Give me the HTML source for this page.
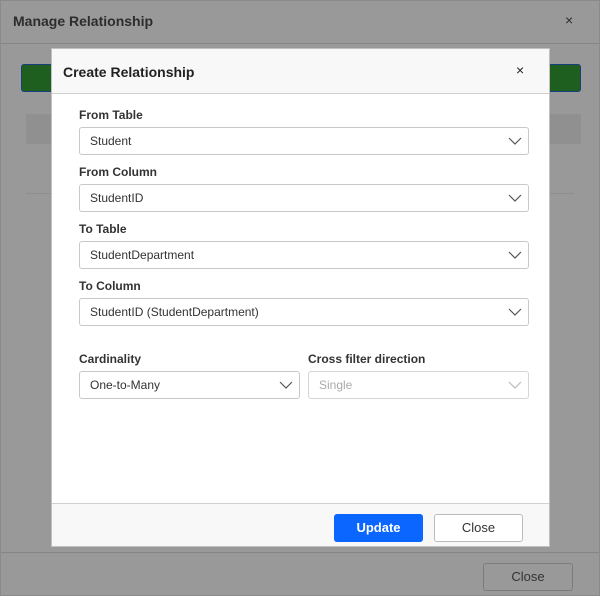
<!DOCTYPE html>
<html><head><style>
*{box-sizing:border-box;margin:0;padding:0}
body{width:600px;height:596px;position:relative;overflow:hidden;font-family:"Liberation Sans",Arial,sans-serif;background:#999}
.abs{position:absolute}
.lbl{position:absolute;left:79px;font-size:12px;font-weight:bold;color:#333}
.inp{position:absolute;height:28px;border:1px solid #c8c8c8;border-radius:3px;background:#fff;font-size:12px;color:#333;padding-left:10px;line-height:26px}
.inp svg{position:absolute;right:6px;top:8px}
</style></head><body>
<div class="abs" style="left:0;top:0;width:600px;height:596px;border:1px solid #8a8a8a"></div>
<div class="abs" style="left:13px;top:13px;font-size:14px;font-weight:bold;color:#2d2d2d">Manage Relationship</div>
<div class="abs" style="left:565px;top:12px;font-size:14px;color:#2d2d2d">×</div>
<div class="abs" style="left:1px;top:43px;width:598px;height:1px;background:#858585"></div>
<div class="abs" style="left:21px;top:64px;width:560px;height:28px;background:#1e5e1e;border:1px solid #1a3f80;border-radius:3px"></div>
<div class="abs" style="left:26px;top:114px;width:555px;height:30px;background:#909090"></div>
<div class="abs" style="left:26px;top:193px;width:548px;height:1px;background:#8e8e8e"></div>
<div class="abs" style="left:1px;top:552px;width:598px;height:1px;background:#858585"></div>
<div class="abs" style="left:483px;top:563px;width:90px;height:28px;border:1px solid #7c7c7c;border-radius:3px;text-align:center;line-height:26px;font-size:13px;color:#333">Close</div>

<div class="abs" style="left:51px;top:48px;width:499px;height:499px;background:#fff;border:1px solid #c0c0c0">
 <div class="abs" style="left:0;top:0;width:497px;height:45px;background:#f8f8f8;border-bottom:1px solid #d0d0d0"></div>
 <div class="abs" style="left:11px;top:15px;font-size:14px;font-weight:bold;color:#222">Create Relationship</div>
 <div class="abs" style="left:464px;top:13px;font-size:14px;color:#222">×</div>
 <div class="abs" style="left:0;top:454px;width:497px;height:43px;background:#f8f8f8;border-top:1px solid #d0d0d0"></div>
 <div class="abs" style="left:282px;top:465px;width:89px;height:28px;background:#0a66ff;border-radius:3px;color:#fff;font-size:13px;font-weight:bold;text-align:center;line-height:28px">Update</div>
 <div class="abs" style="left:382px;top:465px;width:89px;height:28px;background:#fff;border:1px solid #bbb;border-radius:3px;color:#333;font-size:13px;text-align:center;line-height:26px">Close</div>
</div>

<div class="lbl" style="top:108px">From Table</div>
<div class="inp" style="left:79px;top:127px;width:450px">Student<svg width="14" height="10"><path d="M1 2l6 6 6-6" fill="none" stroke="#555" stroke-width="1.2"/></svg></div>
<div class="lbl" style="top:165px">From Column</div>
<div class="inp" style="left:79px;top:184px;width:450px">StudentID<svg width="14" height="10"><path d="M1 2l6 6 6-6" fill="none" stroke="#555" stroke-width="1.2"/></svg></div>
<div class="lbl" style="top:222px">To Table</div>
<div class="inp" style="left:79px;top:241px;width:450px">StudentDepartment<svg width="14" height="10"><path d="M1 2l6 6 6-6" fill="none" stroke="#555" stroke-width="1.2"/></svg></div>
<div class="lbl" style="top:279px">To Column</div>
<div class="inp" style="left:79px;top:298px;width:450px">StudentID (StudentDepartment)<svg width="14" height="10"><path d="M1 2l6 6 6-6" fill="none" stroke="#555" stroke-width="1.2"/></svg></div>
<div class="lbl" style="top:352px">Cardinality</div>
<div class="lbl" style="top:352px;left:308px">Cross filter direction</div>
<div class="inp" style="left:79px;top:371px;width:221px">One-to-Many<svg width="14" height="10"><path d="M1 2l6 6 6-6" fill="none" stroke="#555" stroke-width="1.2"/></svg></div>
<div class="inp" style="left:308px;top:371px;width:221px;color:#aaa;border-color:#d6d6d6">Single<svg width="14" height="10"><path d="M1 2l6 6 6-6" fill="none" stroke="#bbb" stroke-width="1.2"/></svg></div>
</body></html>
